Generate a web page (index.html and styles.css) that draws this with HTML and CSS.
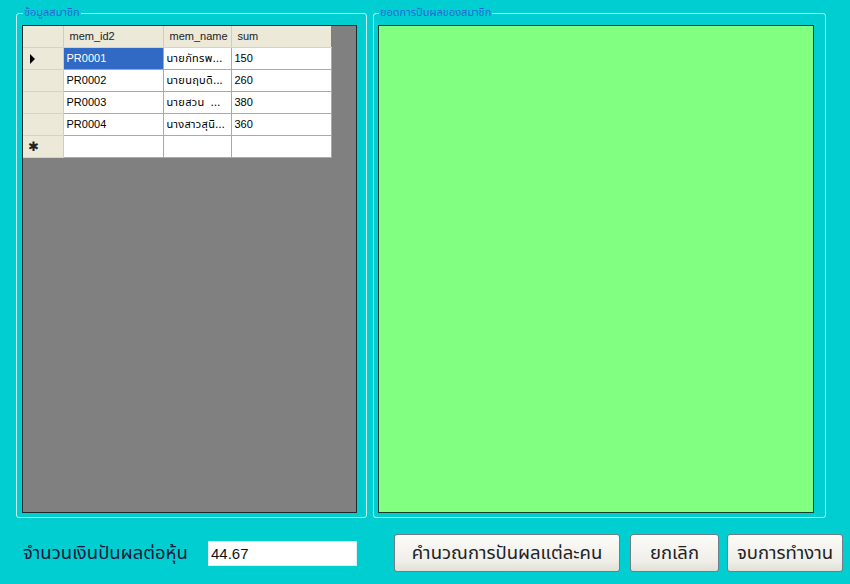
FILE: index.html
```html
<!DOCTYPE html>
<html lang="th">
<head>
<meta charset="utf-8">
<title>ปันผลสมาชิก</title>
<link rel="stylesheet" href="styles.css">
</head>
<body>
<div class="window">
  <div class="groups">
    <fieldset class="group group-left">
      <legend class="legend">ข้อมูลสมาชิก</legend>
      <div class="grid">
        <table class="dgv">
          <colgroup>
            <col class="w-rh">
            <col class="w-id">
            <col class="w-name">
            <col class="w-sum">
          </colgroup>
          <thead>
            <tr>
              <th class="rh"></th>
              <th>mem_id2</th>
              <th>mem_name</th>
              <th class="last">sum</th>
            </tr>
          </thead>
          <tbody>
            <tr>
              <td class="rh"><span class="arrow"></span></td>
              <td class="sel">PR0001</td>
              <td class="thai">นายภัทรพ...</td>
              <td>150</td>
            </tr>
            <tr>
              <td class="rh"></td>
              <td>PR0002</td>
              <td class="thai">นายนฤบดิ...</td>
              <td>260</td>
            </tr>
            <tr>
              <td class="rh"></td>
              <td>PR0003</td>
              <td class="thai">นายสวน&nbsp;&nbsp;...</td>
              <td>380</td>
            </tr>
            <tr>
              <td class="rh"></td>
              <td>PR0004</td>
              <td class="thai">นางสาวสุนิ...</td>
              <td>360</td>
            </tr>
            <tr>
              <td class="rh star">✱</td>
              <td></td>
              <td></td>
              <td></td>
            </tr>
          </tbody>
        </table>
      </div>
    </fieldset>
    <fieldset class="group group-right">
      <legend class="legend">ยอดการปันผลของสมาชิก</legend>
      <div class="chart"></div>
    </fieldset>
  </div>
  <div class="bottom">
    <span class="label">จำนวนเงินปันผลต่อหุ้น</span>
    <input class="input" type="text" value="44.67">
    <button class="btn btn-calc">คำนวณการปันผลแต่ละคน</button>
    <button class="btn btn-cancel">ยกเลิก</button>
    <button class="btn btn-exit">จบการทำงาน</button>
  </div>
</div>
</body>
</html>
```

FILE: styles.css
```css
html, body {
  margin: 0;
  padding: 0;
}
body {
  width: 850px;
  height: 584px;
  background: #00ced1;
  overflow: hidden;
  font-family: "Liberation Sans", Arial, sans-serif;
}
.window {
  display: flex;
  flex-direction: column;
}
.groups {
  display: flex;
  gap: 6px;
  padding-left: 16px;
  padding-top: 7px;
}
.group {
  margin: 0;
  border: 1px solid #c4f3f3;
  border-radius: 3px;
  min-width: 0;
}
.group-left {
  width: 335px;
  padding: 6px 9px 4px 5px;
}
.group-right {
  width: 436px;
  padding: 6px 11px 4px 4px;
}
.legend {
  font-family: "Noto Sans Thai", "Noto Sans", "DejaVu Sans", sans-serif;
  font-size: 11px;
  line-height: 12px;
  height: 12px;
  color: #2a66d6;
  padding: 0 1px;
  margin-left: 1px;
}
.grid {
  height: 486px;
  background: #808080;
  border: 1px solid #1e2b2b;
}
.dgv {
  border-collapse: collapse;
  table-layout: fixed;
  width: 308px;
  font-size: 11px;
  color: #000;
}
.w-rh { width: 40px; }
.w-id { width: 100px; }
.w-name { width: 68px; }
.w-sum { width: 100px; }
.dgv th {
  height: 21px;
  box-sizing: border-box;
  background: #ece9d8;
  font-weight: normal;
  text-align: left;
  padding: 0 0 0 6px;
  border-right: 1px solid #d0cdbd;
  border-bottom: 1px solid #d6d3c4;
  color: #222;
  white-space: nowrap;
  overflow: hidden;
}
.dgv th.last {
  border-right: none;
}
.dgv td {
  height: 22px;
  box-sizing: border-box;
  background: #fff;
  padding: 0 0 0 3px;
  border-right: 1px solid #a9a9a9;
  border-bottom: 1px solid #a9a9a9;
  white-space: nowrap;
  overflow: hidden;
}
.dgv .rh {
  padding: 0;
  background: #ece9d8;
  border-right: 1px solid #d0cdbd;
  border-bottom: 1px solid #d6d3c4;
  text-align: left;
}
.dgv td.sel {
  background: #316ac5;
  color: #fff;
}
.dgv td.thai {
  font-family: "Noto Sans Thai", "Noto Sans", "DejaVu Sans", sans-serif;
  font-size: 11px;
  letter-spacing: 0.3px;
  padding-left: 3px;
}
.arrow {
  display: inline-block;
  margin-left: 7px;
  width: 0;
  height: 0;
  border-top: 5px solid transparent;
  border-bottom: 5px solid transparent;
  border-left: 5px solid #000;
  vertical-align: middle;
}
.dgv td.star {
  font-size: 13px;
  padding-left: 5px;
  color: #222;
}
.chart {
  height: 486px;
  background: #80ff80;
  border: 1px solid #1c3b2a;
}
.bottom {
  display: flex;
  align-items: center;
  height: 38px;
  margin-top: 16px;
  padding-left: 23px;
}
.label {
  width: 185px;
  font-family: "Noto Sans Thai", "Noto Sans", "DejaVu Sans", sans-serif;
  font-size: 18.5px;
  color: #14193a;
  white-space: nowrap;
}
.input {
  box-sizing: border-box;
  width: 149px;
  height: 25px;
  margin: 0;
  border: 1px solid #e4eef0;
  background: #fff;
  font-family: "Liberation Sans", Arial, sans-serif;
  font-size: 15px;
  color: #111;
  padding: 0 2px;
  outline: none;
}
.btn {
  box-sizing: border-box;
  height: 38px;
  margin: 0;
  padding: 0;
  border: 1px solid #6f7f8a;
  border-radius: 3px;
  background: linear-gradient(#fbfbf8, #f0efe9 70%, #e2e0d6);
  font-family: "Noto Sans Thai", "Noto Sans", "DejaVu Sans", sans-serif;
  font-size: 18.5px;
  color: #222;
}
.btn-calc {
  width: 226px;
  margin-left: 37px;
}
.btn-cancel {
  width: 89px;
  margin-left: 10px;
}
.btn-exit {
  width: 116px;
  margin-left: 8px;
}
```
